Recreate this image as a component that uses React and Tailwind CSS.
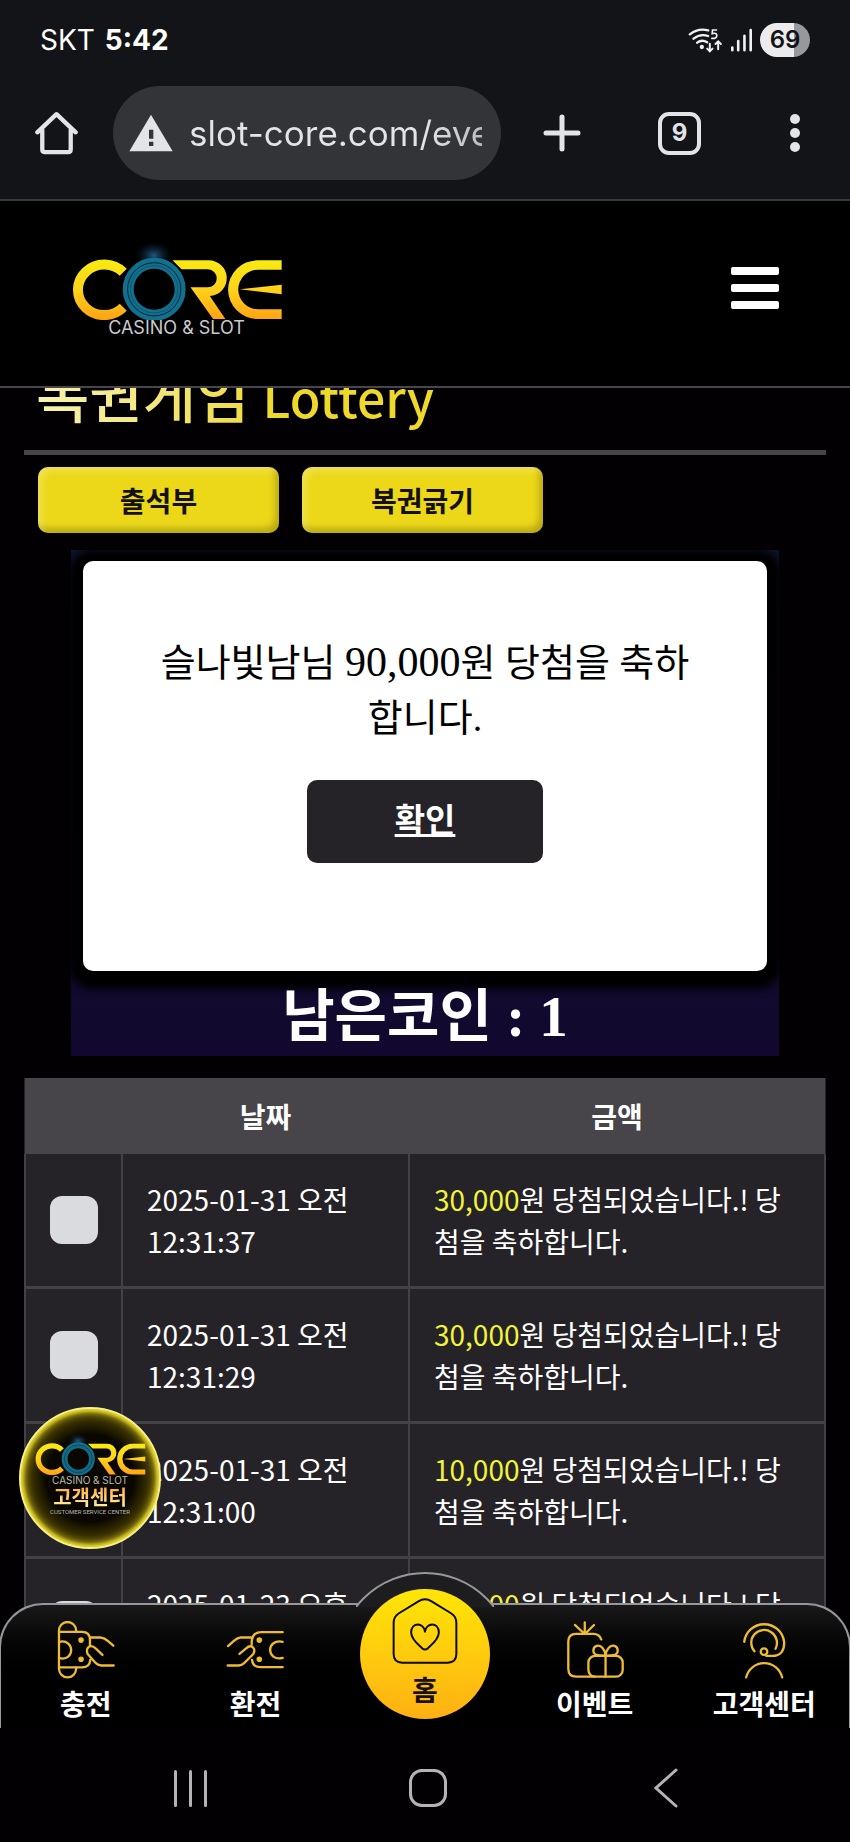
import { useState } from 'react'

const wins = [
    { id: 1, date: '2025-01-31 오전', time: '12:31:37', amount: '30,000' },
    { id: 2, date: '2025-01-31 오전', time: '12:31:29', amount: '30,000' },
    { id: 3, date: '2025-01-31 오전', time: '12:31:00', amount: '10,000' },
    { id: 4, date: '2025-01-23 오후', time: '', amount: '10,000' },
]

const SANS = "font-['Noto_Sans_CJK_KR',sans-serif]"

function CoreLogo({ id, className }) {
    return (
        <svg viewBox="210 120 640 240" className={className} aria-label="CORE">
            <defs>
                <linearGradient id={`${id}-gold`} gradientUnits="userSpaceOnUse" x1="0" y1="181" x2="0" y2="357">
                    <stop offset="0" stopColor="#f8ea12" />
                    <stop offset="0.5" stopColor="#ffd21a" />
                    <stop offset="1" stopColor="#ffa414" />
                </linearGradient>
                <radialGradient id={`${id}-flare`}>
                    <stop offset="0" stopColor="#2f7fb8" stopOpacity="0.7" />
                    <stop offset="1" stopColor="#0a2038" stopOpacity="0" />
                </radialGradient>
            </defs>
            <path d="M370 217 A79 76 0 1 0 370 322" fill="none" stroke={`url(#${id}-gold)`} strokeWidth="30" />
            <ellipse cx="462" cy="166" rx="56" ry="42" fill={`url(#${id}-flare)`} />
            <circle cx="463" cy="268" r="78" fill="none" stroke="#12708f" strokeWidth="33" />
            <circle cx="463" cy="268" r="80" fill="none" stroke="#06232f" strokeWidth="3" />
            <circle cx="463" cy="268" r="71" fill="none" stroke="#0b4a60" strokeWidth="2" />
            <g fill={`url(#${id}-gold)`}>
                <path d="M518 181 H625 A53 53 0 0 1 630 288 L677 357 H640 L572 262 H624 A27 27 0 0 0 624 208 H545 Z" />
                <path d="M846 181 H773 A88 88 0 0 0 773 357 H846 V328 H775 A59 59 0 0 1 775 209 H846 Z" />
                <path d="M720 268 L846 254 V283 Z" />
            </g>
        </svg>
    )
}

function StatusBar() {
    return (
        <div className="flex h-20 items-center justify-between pl-10 pr-10 font-['Inter',sans-serif] text-[28px]">
            <div className="flex gap-[10px] text-white">
                <span>SKT</span>
                <span className="font-bold">5:42</span>
            </div>
            <div className="flex items-center gap-[7px]">
                {/* wifi */}
                <svg viewBox="790 82 104 78" className="h-[26px] w-[35px]" fill="none" stroke="#f1f1f4" strokeWidth="7" strokeLinecap="round">
                    <path d="M795 104 Q820 84 850 92" />
                    <path d="M806 117 Q826 101 850 109" />
                    <path d="M817 129 Q831 118 847 128" />
                    <circle cx="831" cy="142" r="3" fill="#f1f1f4" />
                    <path d="M875 91 H863 L862 102 Q876 98 876 108 Q875 118 861 116" strokeWidth="5" />
                    <path d="M855 132 V154 M847 147 L855 155 L863 147" strokeWidth="6" />
                    <path d="M880 149 V127 M872 133 L880 125 L888 133" strokeWidth="6" />
                </svg>
                {/* signal */}
                <svg viewBox="910 84 70 72" className="h-6 w-[23px]" fill="none" stroke="#f1f1f4" strokeWidth="8" strokeLinecap="round">
                    <path d="M917 151 V143 M935 151 V123 M954 151 V107 M973 151 V90" />
                </svg>
                <div className="flex h-[34px] w-[50px] items-center justify-center rounded-full bg-linear-to-r from-[#ececef] from-68% to-[#98989c] to-68% text-2xl leading-none font-semibold text-[#131417]">
                    69
                </div>
            </div>
        </div>
    )
}

function BrowserBar() {
    return (
        <div className="flex h-[106px] items-center pr-[50px] pl-[35px]">
            <button aria-label="홈 화면">
                <svg viewBox="105 334 130 132" className="h-11 w-[43px]" fill="none" stroke="#e3e4e8" strokeWidth="13" strokeLinejoin="round" strokeLinecap="round">
                    <path d="M112 398 L170 343 L228 398 M127 390 V450 Q127 458 135 458 H205 Q213 458 213 450 V390" />
                </svg>
            </button>
            <div className="ml-[35px] flex h-[94px] w-[388px] items-center gap-4 rounded-full bg-[#333438] pr-[19px] pl-4">
                <svg viewBox="386 334 132 114" className="h-[38px] w-11 shrink-0">
                    <path d="M452 336 L517 446 H387 Z" fill="#e3e4e8" />
                    <path d="M446 381 H459 V408 H446 Z M446 417 H459 V430 H446 Z" fill="#333438" />
                </svg>
                <input
                    aria-label="주소"
                    readOnly
                    value="slot-core.com/event"
                    className="w-full min-w-0 bg-linear-to-r from-[#e3e4e8] from-80% to-[#bcbdc1] bg-clip-text font-['Inter',sans-serif] text-[35px] leading-[48px] text-transparent outline-none"
                />
            </div>
            <div className="flex flex-1 items-center justify-between pl-[42px]">
                <button aria-label="새 탭">
                    <svg viewBox="0 0 38 38" className="size-[38px]" stroke="#e3e4e8" strokeWidth="5" strokeLinecap="round">
                        <path d="M19 3 V35 M3 19 H35" />
                    </svg>
                </button>
                <button className="mr-3 flex size-[43px] items-center justify-center rounded-[11px] border-4 border-[#e3e4e8] font-['Inter',sans-serif] text-2xl leading-none font-bold text-[#e3e4e8]">
                    9
                </button>
                <button aria-label="메뉴" className="flex flex-col gap-1">
                    <span className="size-[10px] rounded-full bg-[#e3e4e8]" />
                    <span className="size-[10px] rounded-full bg-[#e3e4e8]" />
                    <span className="size-[10px] rounded-full bg-[#e3e4e8]" />
                </button>
            </div>
        </div>
    )
}

function SiteHeader() {
    return (
        <header className="flex h-[187px] shrink-0 items-center justify-between border-b-2 border-[#48464a] bg-black pr-[71px] pb-3 pl-[70px]">
            <a href="#" className="flex flex-col items-center">
                <CoreLogo id="top" className="h-20 w-[213px]" />
                <span className="font-['Inter',sans-serif] text-[18px] leading-4 text-[#c9c9cc]">CASINO &amp; SLOT</span>
            </a>
            <button aria-label="전체 메뉴" className="flex flex-col gap-[9px]">
                <span className="h-2 w-12 rounded-[2px] bg-white" />
                <span className="h-2 w-12 rounded-[2px] bg-white" />
                <span className="h-2 w-12 rounded-[2px] bg-white" />
            </button>
        </header>
    )
}

function TabButton({ children }) {
    return (
        <button className="h-[66px] w-[241px] rounded-[10px] bg-[#ecd819] text-[28px] leading-[42px] font-bold text-[#14100a] shadow-[inset_4px_4px_6px_rgba(255,255,255,0.25),inset_-4px_-5px_6px_rgba(0,0,0,0.22)]">
            {children}
        </button>
    )
}

function WinDialog() {
    return (
        <div
            role="dialog"
            className="flex h-[410px] flex-col items-center rounded-[10px] bg-white px-[72px] pt-[74px] font-['Liberation_Serif','Noto_Sans_CJK_KR',serif] shadow-[0_3px_8px_15px_#000]"
        >
            <p className="text-center text-[38px] leading-[55px] text-black">
                슬나빛남님 <span className="text-[42px]">90,000</span>원 당첨을 축하합니다.
            </p>
            <button className="mt-[34px] h-[83px] w-[236px] rounded-[10px] bg-[#252327] text-[33px] font-bold text-white underline">
                확인
            </button>
        </div>
    )
}

function WinTable() {
    const [picked, setPicked] = useState([])
    const toggle = (id) => setPicked(picked.includes(id) ? picked.filter((p) => p !== id) : [...picked, id])

    return (
        <table className="mt-[22px] w-full border-collapse bg-[#252327] text-[28px] leading-[42px] text-white">
            <thead>
                <tr className="h-[76px] bg-[#474549]">
                    <th className="w-[97px]" />
                    <th className="w-[287px] font-bold">날짜</th>
                    <th className="font-bold">금액</th>
                </tr>
            </thead>
            <tbody>
                {wins.map((win) => (
                    <tr key={win.id} className="border-b-3 border-[#434145]">
                        <td className="border-x-2 border-[#434145] pl-6 align-middle">
                            <input
                                type="checkbox"
                                aria-label={`${win.date} ${win.time}`}
                                checked={picked.includes(win.id)}
                                onChange={() => toggle(win.id)}
                                className="block size-12 appearance-none rounded-xl bg-[#d9dbde] checked:bg-[#ecd819]"
                            />
                        </td>
                        <td className="border-x-2 border-[#434145] p-6 align-top">
                            {win.date} {win.time}
                        </td>
                        <td className="border-x-2 border-[#434145] p-6 align-top">
                            <span className="text-[#f2f43a]">{win.amount}</span>원 당첨되었습니다.! 당첨을 축하합니다.
                        </td>
                    </tr>
                ))}
            </tbody>
        </table>
    )
}

function SupportBadge() {
    return (
        <a
            href="#"
            className="absolute bottom-[179px] left-[19px] flex size-[142px] flex-col items-center rounded-full border-2 border-[#f6f08a] bg-[radial-gradient(circle,#0a0700_45%,#4d4100_66%,#e0cd10_72%)] pt-6 shadow-[inset_0_0_8px_2px_#f5e83a]"
        >
            <CoreLogo id="badge" className="h-[42px] w-28" />
            <span className="font-['Inter',sans-serif] text-[10px] leading-[11px] text-[#b9b9b4]">CASINO &amp; SLOT</span>
            <span className="bg-linear-to-b from-[#ffa92e] to-[#fdf3a0] bg-clip-text text-[20px] leading-[22px] font-bold text-transparent">
                고객센터
            </span>
            <span className="font-['Roboto',sans-serif] text-[6px] leading-2 text-[#b9b9b4]">CUSTOMER SERVICE CENTER</span>
        </a>
    )
}

function DepositIcon() {
    return (
        <>
            <path d="M173 835 V719 A26 26 0 0 1 225 719 V723 M173 835 A26 26 0 0 0 225 835 V831" />
            <path d="M173 723 H243 Q267 723 267 747 V764 M173 831 H243 Q266 831 268 808" />
            <path d="M175 753 C198 748 210 764 210 778 C210 794 198 808 175 803" />
            <path d="M268 740 H298 Q312 742 322 751 L338 765 M305 793 L285 774 Q274 763 264 768 Q254 776 260 790 L285 818 Q292 825 302 825 H339" />
            <circle cx="240" cy="748" r="5" fill="#eebb35" />
            <circle cx="240" cy="806" r="5" fill="#eebb35" />
        </>
    )
}

function WithdrawIcon() {
    return (
        <>
            <path d="M849 724 H785 Q758 724 755 750 V762 M849 830 H782 Q758 830 756 808" />
            <path d="M849 753 C825 748 811 762 811 778 C811 794 825 808 849 802" />
            <path d="M753 740 H722 Q710 742 700 751 L683 766 M718 790 L738 773 Q749 763 758 769 Q767 777 760 790 L732 818 Q724 825 716 825 H682" />
            <circle cx="778" cy="748" r="5" fill="#eebb35" />
            <circle cx="778" cy="806" r="5" fill="#eebb35" />
        </>
    )
}

function EventIcon() {
    return (
        <>
            <path d="M214 236 Q208 219 190 219 H137 Q114 219 114 243 V325 Q114 349 138 349 H195" />
            <path d="M164 184 V216 M134 192 L162 218 M192 192 L166 218" />
            <rect x="175" y="286" width="104" height="63" rx="20" />
            <path d="M227 286 V349" />
            <path d="M227 284 C215 286 190 286 190 270 C190 254 208 250 218 262 Q225 270 227 284 C239 286 264 286 264 270 C264 254 246 250 236 262 Q229 270 227 284" />
        </>
    )
}

function SupportIcon() {
    return (
        <>
            <path d="M645 243 A61 61 0 0 1 766 243 C768 270 755 286 730 286 H712" />
            <path d="M676 272 A39 39 0 1 1 740 264" />
            <circle cx="705" cy="273" r="10" />
            <path d="M651 351 A56 56 0 0 1 760 351" />
        </>
    )
}

function NavItem({ label, viewBox, children }) {
    return (
        <a href="#" className="flex flex-1 flex-col items-center gap-[10px] pt-4">
            <svg viewBox={viewBox} className="h-[58px] w-[60px]" fill="none" stroke="#eebb35" strokeWidth="7" strokeLinecap="round" strokeLinejoin="round">
                {children}
            </svg>
            <span className="text-[28px] leading-7 font-bold whitespace-nowrap text-white">{label}</span>
        </a>
    )
}

function BottomNav() {
    return (
        <nav className="absolute -inset-x-px bottom-0 flex h-[125px] rounded-t-[44px] border-2 border-b-0 border-[#98979a] bg-linear-to-b from-[#19191a] to-black to-70%">
            {/* bump behind the home button */}
            <div className="absolute inset-x-0 -top-[33px] mx-auto h-[35px] w-[138px] overflow-hidden">
                <div className="-ml-[19px] size-44 rounded-full border-2 border-[#98979a] bg-[#1d1c1e]" />
            </div>
            <NavItem label="충전" viewBox="165 690 180 176"><DepositIcon /></NavItem>
            <NavItem label="환전" viewBox="675 690 180 176"><WithdrawIcon /></NavItem>
            <div className="relative flex flex-1 justify-center">
                <a href="#" className="-mt-4 flex size-[130px] flex-col items-center gap-[10px] rounded-full bg-linear-to-b from-[#fde606] to-[#ffb012] pt-2">
                    <svg viewBox="275 108 200 204" className="h-[68px] w-[66px]" fill="none" stroke="#0b0a05" strokeWidth="6" strokeLinejoin="round">
                        <path d="M355 120 Q375 108 395 120 L455 157 Q470 167 470 185 V280 Q470 306 444 306 H306 Q280 306 280 280 V185 Q280 167 295 157 Z" />
                        <path d="M375 212 C372 184 334 182 333 214 C333 236 355 252 366 262 Q375 270 384 262 C395 252 417 236 417 214 C416 182 378 184 375 212 Z" />
                    </svg>
                    <span className="text-[28px] leading-7 font-bold text-[#171003]">홈</span>
                </a>
            </div>
            <NavItem label="이벤트" viewBox="105 180 180 176"><EventIcon /></NavItem>
            <NavItem label="고객센터" viewBox="615 180 180 176"><SupportIcon /></NavItem>
        </nav>
    )
}

function SystemNav() {
    return (
        <div className="grid h-[114px] shrink-0 grid-cols-3 place-items-center bg-[#020003] pt-[6px] pr-[65px] pl-[71px]">
            <button aria-label="최근 앱" className="flex gap-3">
                <span className="h-[37px] w-[3px] rounded-full bg-[#b4b3b6]" />
                <span className="h-[37px] w-[3px] rounded-full bg-[#b4b3b6]" />
                <span className="h-[37px] w-[3px] rounded-full bg-[#b4b3b6]" />
            </button>
            <button aria-label="홈" className="size-[38px] rounded-[13px] border-3 border-[#b4b3b6]" />
            <button aria-label="뒤로">
                <svg viewBox="0 0 24 40" className="h-10 w-6" fill="none" stroke="#b4b3b6" strokeWidth="3" strokeLinecap="round">
                    <path d="M22 2 L2 20 L22 38" />
                </svg>
            </button>
        </div>
    )
}

export default function App() {
    return (
        <div className={`flex h-screen flex-col overflow-hidden bg-[#020003] ${SANS}`}>
            {/* Phone and browser chrome */}
            <div className="h-[201px] shrink-0 border-b-2 border-[#3a393d] bg-[#131417]">
                <StatusBar />
                <BrowserBar />
            </div>

            <SiteHeader />

            <div className="relative min-h-0 flex-1 overflow-hidden">
                <main className="px-6">
                    {/* Title is scrolled halfway under the header */}
                    <div className="flex h-[67px] items-end overflow-hidden border-b-5 border-[#48454a] pl-3">
                        <h1 className="bg-linear-to-r from-[#f8f3b0] to-[#eed92a] to-60% bg-clip-text pb-3 text-[58px] leading-[84px] font-medium text-transparent">
                            복권게임 <span className="text-[50px]">Lottery</span>
                        </h1>
                    </div>

                    <div className="flex gap-[23px] pt-3 pl-[14px]">
                        <TabButton>출석부</TabButton>
                        <TabButton>복권긁기</TabButton>
                    </div>

                    <section className="mx-[47px] mt-[17px] h-[506px] overflow-hidden bg-linear-to-b from-[#11152e] to-[#12082f] px-3 pt-[11px]">
                        <WinDialog />
                        <p className="relative mt-[10px] text-center font-['Liberation_Serif','Noto_Sans_CJK_KR',serif] text-[57px] leading-[72px] font-bold text-white">
                            남은코인 : 1
                        </p>
                    </section>

                    <WinTable />
                </main>

                <SupportBadge />
                <BottomNav />
            </div>

            <SystemNav />
        </div>
    )
}
